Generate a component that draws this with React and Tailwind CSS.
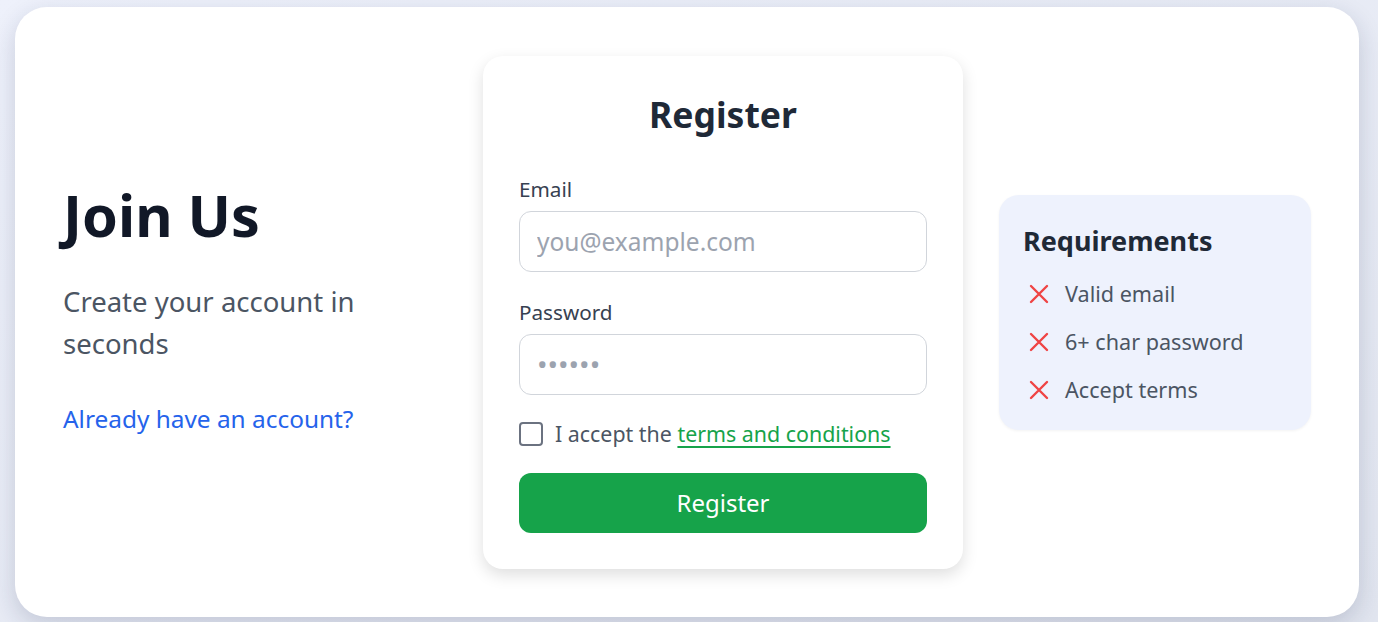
import React from "react";

function XIcon() {
  return (
    <svg width="20" height="20" viewBox="0 0 20 20" fill="none" className="shrink-0">
      <path d="M2 2L18 18M18 2L2 18" stroke="#ef4444" strokeWidth="2.4" strokeLinecap="round" />
    </svg>
  );
}

export default function App() {
  return (
    <div
      className="w-[1378px] h-[622px] overflow-hidden bg-gradient-to-br from-[#eef1fb] to-[#e1e5ef] pl-[15px] pt-[7px]"
      style={{ fontFamily: '"Noto Sans", "Open Sans", sans-serif' }}
    >
      <div className="w-[1344px] h-[610px] bg-white rounded-[32px] shadow-[0_8px_24px_rgba(30,41,80,0.18)] flex items-center px-[48px]">
        {/* Left */}
        <div className="w-[372px] shrink-0 flex flex-col -mt-[9px]">
          <h1 className="text-[57.5px] leading-[72px] font-bold text-[#111827]">Join Us</h1>
          <p className="mt-[30px] text-[27.5px] leading-[42px] text-[#4b5563] w-[330px]">
            Create your account in seconds
          </p>
          <a className="mt-[37px] text-[24.4px] leading-[34px] text-[#2563eb]">Already have an account?</a>
        </div>

        {/* Middle card */}
        <div className="ml-[48px] w-[480px] shrink-0 bg-white rounded-[20px] shadow-[0_6px_16px_rgba(0,0,0,0.13)] px-[36px] pt-[34px] pb-[36px]">
          <h2 className="text-center text-[35.5px] leading-[48px] font-bold text-[#1f2937]">Register</h2>
          <div className="mt-[37px]">
            <label className="block text-[20.7px] leading-[28px] text-[#374151]">Email</label>
            <input
              type="text"
              placeholder="you@example.com"
              className="mt-[8px] w-full h-[61px] rounded-[12px] border border-[#d1d5db] px-[17px] text-[24.5px] text-[#111827] placeholder:text-[#9ca3af] outline-none"
            />
          </div>
          <div className="mt-[26px]">
            <label className="block text-[20.7px] leading-[28px] text-[#374151]">Password</label>
            <input
              type="text"
              placeholder="••••••"
              className="mt-[8px] w-full h-[61px] rounded-[12px] border border-[#d1d5db] px-[17px] text-[28px] text-[#111827] placeholder:text-[#9ca3af] outline-none"
            />
          </div>
          <div className="mt-[24px] flex items-center gap-[12px]">
            <span className="w-[24px] h-[24px] rounded-[4px] border-2 border-[#6b7280] bg-white shrink-0" />
            <span className="text-[21.4px] leading-[30px] text-[#4b5563]">
              I accept the{" "}
              <a className="text-[#16a34a] underline underline-offset-[4px]">terms and conditions</a>
            </span>
          </div>
          <button className="mt-[24px] w-full h-[60px] rounded-[12px] bg-[#16a34a] text-white text-[24px]">
            Register
          </button>
        </div>

        {/* Right */}
        <div className="ml-[36px] w-[312px] shrink-0 bg-[#eef2fd] rounded-[20px] shadow-[0_1px_3px_rgba(0,0,0,0.05)] px-[24px] pt-[27px] pb-[24px]">
          <h3 className="text-[27px] leading-[38px] font-bold text-[#1f2937]">Requirements</h3>
          <ul className="mt-[18px] flex flex-col gap-[16px]">
            {["Valid email", "6+ char password", "Accept terms"].map((t) => (
              <li key={t} className="flex items-center gap-[16px] pl-[6px]">
                <XIcon />
                <span className="text-[21.6px] leading-[32px] text-[#4b5563]">{t}</span>
              </li>
            ))}
          </ul>
        </div>
      </div>
    </div>
  );
}
